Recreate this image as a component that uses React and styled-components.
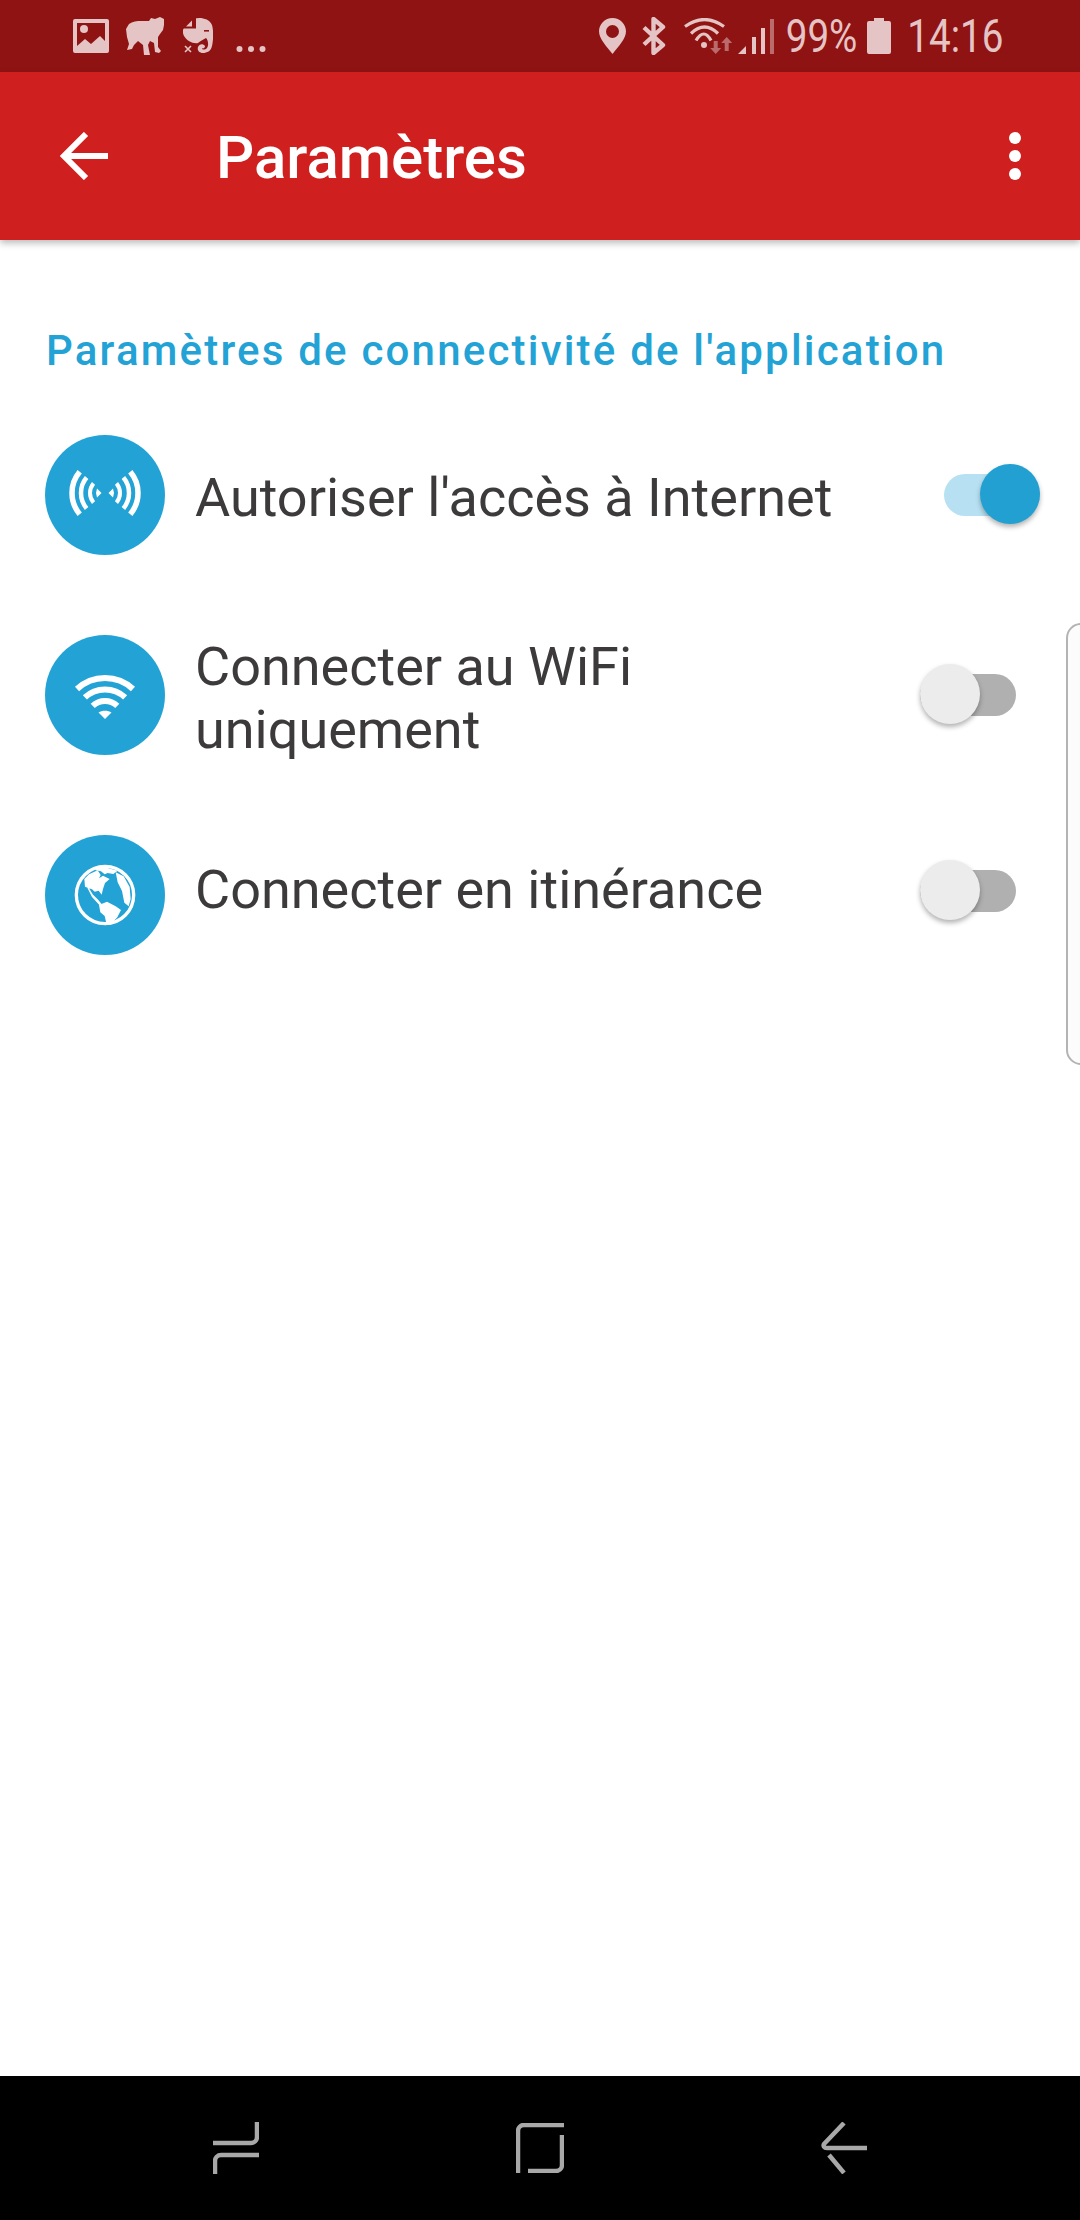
import React from 'react';
import styled, { createGlobalStyle } from 'styled-components';

const Global = createGlobalStyle`
  html, body { margin: 0; padding: 0; background: #fff; }
  body { font-family: Roboto, "Liberation Sans", sans-serif; }
  * { box-sizing: border-box; }
`;

const Screen = styled.div`
  position: relative;
  width: 1080px;
  height: 2220px;
  display: flex;
  flex-direction: column;
  overflow: hidden;
  background: #fff;
`;

const StatusBar = styled.div`
  height: 72px;
  flex: none;
  background: #901313;
  color: #e4c4c4;
  display: flex;
  align-items: center;
  justify-content: space-between;
  padding: 0 76px 0 73px;
`;

const StatusGroup = styled.div`
  display: flex;
  align-items: center;
`;

const StatusText = styled.span`
  display: inline-block;
  font-family: Roboto, "Liberation Sans", sans-serif;
  font-weight: 400;
  font-size: 46px;
  line-height: 72px;
  white-space: nowrap;
  transform: scaleX(0.84);
  transform-origin: right center;
  margin-left: ${p => p.$ml}px;
`;

const StatusIcon = styled.svg`
  display: block;
  flex: none;
  fill: currentColor;
  margin-left: ${p => p.$ml || 0}px;
`;

const AppBar = styled.header`
  position: relative;
  z-index: 1;
  flex: none;
  height: 168px;
  background: #cf1f1e;
  color: #fff;
  display: flex;
  align-items: center;
  padding: 0 59px 0 60px;
  box-shadow: 0 3px 7px rgba(0, 0, 0, 0.28);
`;

const Title = styled.h1`
  flex: 1;
  margin: 4px 0 0 108px;
  font-size: 60px;
  font-weight: 500;
  line-height: 60px;
`;

const Kebab = styled.div`
  display: flex;
  flex-direction: column;
  gap: 6px;
`;

const KebabDot = styled.span`
  width: 12px;
  height: 12px;
  border-radius: 50%;
  background: #fff;
`;

const Content = styled.main`
  flex: 1;
  padding-top: 92px;
`;

const SectionHeading = styled.h2`
  margin: 0 0 26px;
  padding-left: 46px;
  color: #23a3d5;
  font-size: 42px;
  font-weight: 500;
  letter-spacing: 2.2px;
  line-height: 37px;
  white-space: nowrap;
`;

const Row = styled.div`
  height: 200px;
  display: flex;
  align-items: center;
  padding: 0 ${p => p.$pr}px 0 45px;
`;

const Badge = styled.div`
  width: 120px;
  height: 120px;
  flex: none;
  border-radius: 50%;
  background: #23a3d5;
  display: flex;
  align-items: center;
  justify-content: center;
  color: #fff;
`;

const RowLabel = styled.div`
  flex: 1;
  margin: ${p => p.$shift}px 0 0 30px;
  color: #3c3a3b;
  font-size: 54px;
  line-height: 63px;
`;

const Toggle = styled.div`
  position: relative;
  width: 96px;
  height: 42px;
  flex: none;
  margin-top: ${p => p.$shift || 0}px;
  border-radius: 21px;
  background: ${p => (p.$on ? '#b7e1f2' : '#b0b0b0')};
`;

const Knob = styled.span`
  position: absolute;
  top: -10px;
  ${p => (p.$on ? 'right: 0;' : 'left: 0;')}
  width: 60px;
  height: 60px;
  border-radius: 50%;
  background: ${p => (p.$on ? '#22a0d2' : '#ececec')};
  box-shadow: 0 3px 5px rgba(0, 0, 0, 0.3);
`;

const EdgeHandle = styled.div`
  position: absolute;
  left: 1066px;
  top: 623px;
  width: 30px;
  height: 442px;
  border: 2px solid #b4b4b4;
  border-radius: 16px;
  background: #fcfcfc;
`;

const NavBar = styled.nav`
  flex: none;
  height: 144px;
  background: #000;
  display: grid;
  grid-template-columns: repeat(3, 304px);
  justify-content: center;
  align-items: center;
`;

const NavCell = styled.div`
  display: flex;
  justify-content: center;
  color: #a8a8a8;
`;

const Line = styled.svg`
  display: block;
  flex: none;
  fill: none;
  stroke: currentColor;
  margin-left: ${p => p.$ml || 0}px;
`;

const ImageIcon = () => (
  <StatusIcon width="36" height="34" viewBox="0 0 36 34">
    <path fillRule="evenodd" d="M2 0h32a2 2 0 0 1 2 2v30a2 2 0 0 1-2 2H2a2 2 0 0 1-2-2V2a2 2 0 0 1 2-2zM4 4v23l8-7 6 5 9-8 5 5V4z" />
    <circle cx="11" cy="10" r="4" />
  </StatusIcon>
);

const DogIcon = () => (
  <StatusIcon $ml={17} width="38" height="38" viewBox="0 0 38 38">
    <path d="M3 7C8 3 16 4 23 4l2-3 4 1 5-2 4 2v6l-1 5-3 4-2 3v10l3 4-2 2-4-1-1-9-4-2-2 4 2 10h-6l-1-10-5-4-4 4-2 4-5 1 2-6-2-7-1-8z" />
  </StatusIcon>
);

const ElephantIcon = () => (
  <StatusIcon $ml={19} width="30" height="36" viewBox="0 0 30 36">
    <path d="M11 1C16-1 26 0 29 7c2 7 1 17 0 21-1 5-5 7-9 7-4 0-6-3-5-6 1-3 5-4 7-1 0 2-2 3-3 2 0 2 3 2 5 0 2-3 1-8-1-10-3 2-6 3-8 5-5 1-11-2-14-7-2-4-1-7 0-8h10z" />
    <path fill="#901313" d="M0 9.5L9.5 0H13v10.5H0z" />
    <path d="M3 8.5L9 2.5v6z" />
    <rect x="21" y="12" width="5" height="1.6" fill="#901313" />
    <path d="M2 28l6 6M8 28l-6 6" stroke="currentColor" strokeWidth="1.6" fill="none" />
  </StatusIcon>
);

const Ellipsis = () => (
  <StatusIcon $ml={23} width="30" height="36" viewBox="0 0 30 36">
    <circle cx="3.5" cy="31" r="3" />
    <circle cx="15" cy="31" r="3" />
    <circle cx="26.5" cy="31" r="3" />
  </StatusIcon>
);

const PinIcon = () => (
  <StatusIcon width="27" height="36" viewBox="0 0 27 36">
    <path fillRule="evenodd" d="M13.5 0C6 0 0 6 0 13.3 0 21 8 29 13.5 36 19 29 27 21 27 13.3 27 6 21 0 13.5 0zm0 7a6.5 6.5 0 1 1 0 13 6.5 6.5 0 0 1 0-13z" />
  </StatusIcon>
);

const BluetoothIcon = () => (
  <Line $ml={16} width="24" height="38" viewBox="0 0 24 38" strokeWidth="4.4">
    <path d="M2 10.5l19 17.5-9.5 8V2L21 10 2 27.5" strokeLinejoin="round" />
  </Line>
);

const WifiIcon = () => (
  <StatusIcon $ml={18} width="49" height="36" viewBox="0 0 49 36">
    <g fill="none" stroke="currentColor" strokeWidth="3.2">
      <path d="M1 8.5Q20.5-5.5 40 8.5" />
      <path d="M7 15.5Q20.5 2.5 34 15.5" />
      <path d="M12 22.5Q20 9.5 27 22.5" />
    </g>
    <circle cx="20" cy="27" r="3" />
    <g opacity="0.5">
      <path d="M31.7 36l-5.5-6h3.5v-7h4v7h3.5z" />
      <path d="M42.7 19l5.5 6h-3.5v8h-4v-8h-3.5z" />
    </g>
  </StatusIcon>
);

const SignalIcon = () => (
  <StatusIcon $ml={5} width="36" height="36" viewBox="0 0 36 36">
    <path d="M0 36l8-8v8z" />
    <rect x="14" y="19" width="4" height="17" />
    <rect x="23" y="10" width="4" height="26" />
    <rect x="32" y="1" width="4" height="35" opacity="0.5" />
  </StatusIcon>
);

const BatteryIcon = () => (
  <StatusIcon $ml={10} width="24" height="36" viewBox="0 0 24 36">
    <path d="M7 0h10v3h5a2 2 0 0 1 2 2v29a2 2 0 0 1-2 2H2a2 2 0 0 1-2-2V5a2 2 0 0 1 2-2h5z" />
  </StatusIcon>
);

const arcPath = (cx, cy, r, a0, a1) => {
  const rad = d => (d * Math.PI) / 180;
  const x0 = cx + r * Math.cos(rad(a0));
  const y0 = cy + r * Math.sin(rad(a0));
  const x1 = cx + r * Math.cos(rad(a1));
  const y1 = cy + r * Math.sin(rad(a1));
  return `M${x0.toFixed(2)} ${y0.toFixed(2)}A${r} ${r} 0 0 1 ${x1.toFixed(2)} ${y1.toFixed(2)}`;
};

const SignalBadgeIcon = () => (
  <Line width="120" height="120" viewBox="-60 -58 120 120">
    {[[33, 5.5], [24, 4.5], [15, 4]].map(([r, w]) => (
      <React.Fragment key={r}>
        <path d={arcPath(0, 0, r, -40, 40)} strokeWidth={w} />
        <path d={arcPath(0, 0, r, 140, 220)} strokeWidth={w} />
      </React.Fragment>
    ))}
    <path d="M3.5 0L8 -4.5 9 0 8 4.5z M-3.5 0L-8 -4.5 -9 0 -8 4.5z" fill="#fff" stroke="none" />
  </Line>
);

const WifiBadgeIcon = () => (
  <Line width="120" height="120" viewBox="-60 -84 120 120">
    {[41, 29.5, 18].map(r => (
      <path key={r} d={arcPath(0, 0, r, -133, -47)} strokeWidth="6" />
    ))}
    <path d="M0 0L-6.5 -6.5C-3 -9 3 -9 6.5 -6.5z" fill="#fff" stroke="none" />
  </Line>
);

const GlobeBadgeIcon = () => (
  <Line width="80" height="80" viewBox="0 0 240 240">
    <circle cx="120" cy="120" r="86" strokeWidth="10" />
    <g fill="#fff" stroke="none">
      <path d="M58 72l14-14 26-12 9 14-5 10 12-8 20 10-14 12-6 18-4 17-9-12-12 3-8-7-14-5 14 28 22 24 12 3-17-20-14-14-12-19-12-5z" />
      <path d="M102 150l24-10 26 14 16 11-11 22-21 22h-11l-6-26-13-11z" />
      <path d="M152 52l24 12 18 32 3 36-6 22-13-11-7-35-13-26z" />
      <path d="M90 38l38 1 30 8-13 10-17-3-9 4-11-9-16-3z" />
    </g>
  </Line>
);

const ArrowIcon = () => (
  <Line width="48" height="48" viewBox="0 0 48 48" strokeWidth="6">
    <path d="M48 24H4M26 2L4 24l22 22" />
  </Line>
);

const RecentsIcon = () => (
  <Line width="46" height="52" viewBox="0 0 46 52" strokeWidth="4.5">
    <path d="M0 21h38a6 6 0 0 0 6-6V0" />
    <path d="M46 33H8a6 6 0 0 0-6 6v13" />
  </Line>
);

const HomeIcon = () => (
  <Line width="48" height="50" viewBox="0 0 48 50" strokeWidth="4.5">
    <path d="M2 50V8a6 6 0 0 1 6-6h40" />
    <path d="M46 12v30a6 6 0 0 1-6 6H12" />
  </Line>
);

const BackIcon = () => (
  <Line width="46" height="52" viewBox="0 0 46 52" strokeWidth="4.5">
    <path d="M46 26H6c-3 0-4-2-3-4L23 1" />
    <path d="M8 33l15 18" />
  </Line>
);

const rows = [
  { lines: ["Autoriser l'accès à Internet"], on: true, Icon: SignalBadgeIcon, shift: 4 },
  { lines: ['Connecter au WiFi', 'uniquement'], on: false, Icon: WifiBadgeIcon, shift: 5 },
  { lines: ['Connecter en itinérance'], on: false, Icon: GlobeBadgeIcon, shift: -12, toggleShift: -8 },
];

export default function App() {
  return (
    <Screen>
      <Global />
      <StatusBar>
        <StatusGroup>
          <ImageIcon />
          <DogIcon />
          <ElephantIcon />
          <Ellipsis />
        </StatusGroup>
        <StatusGroup>
          <PinIcon />
          <BluetoothIcon />
          <WifiIcon />
          <SignalIcon />
          <StatusText $ml={-2}>99%</StatusText>
          <BatteryIcon />
          <StatusText $ml={-2}>14:16</StatusText>
        </StatusGroup>
      </StatusBar>
      <AppBar>
        <ArrowIcon />
        <Title>Paramètres</Title>
        <Kebab>
          <KebabDot />
          <KebabDot />
          <KebabDot />
        </Kebab>
      </AppBar>
      <Content>
        <SectionHeading>Paramètres de connectivité de l'application</SectionHeading>
        {rows.map(({ lines, on, Icon, shift, toggleShift }) => (
          <Row key={lines[0]} $pr={on ? 40 : 64}>
            <Badge>
              <Icon />
            </Badge>
            <RowLabel $shift={shift}>
              {lines.map(line => (
                <div key={line}>{line}</div>
              ))}
            </RowLabel>
            <Toggle $on={on} $shift={toggleShift}>
              <Knob $on={on} />
            </Toggle>
          </Row>
        ))}
      </Content>
      <EdgeHandle />
      <NavBar>
        <NavCell><RecentsIcon /></NavCell>
        <NavCell><HomeIcon /></NavCell>
        <NavCell><BackIcon /></NavCell>
      </NavBar>
    </Screen>
  );
}
